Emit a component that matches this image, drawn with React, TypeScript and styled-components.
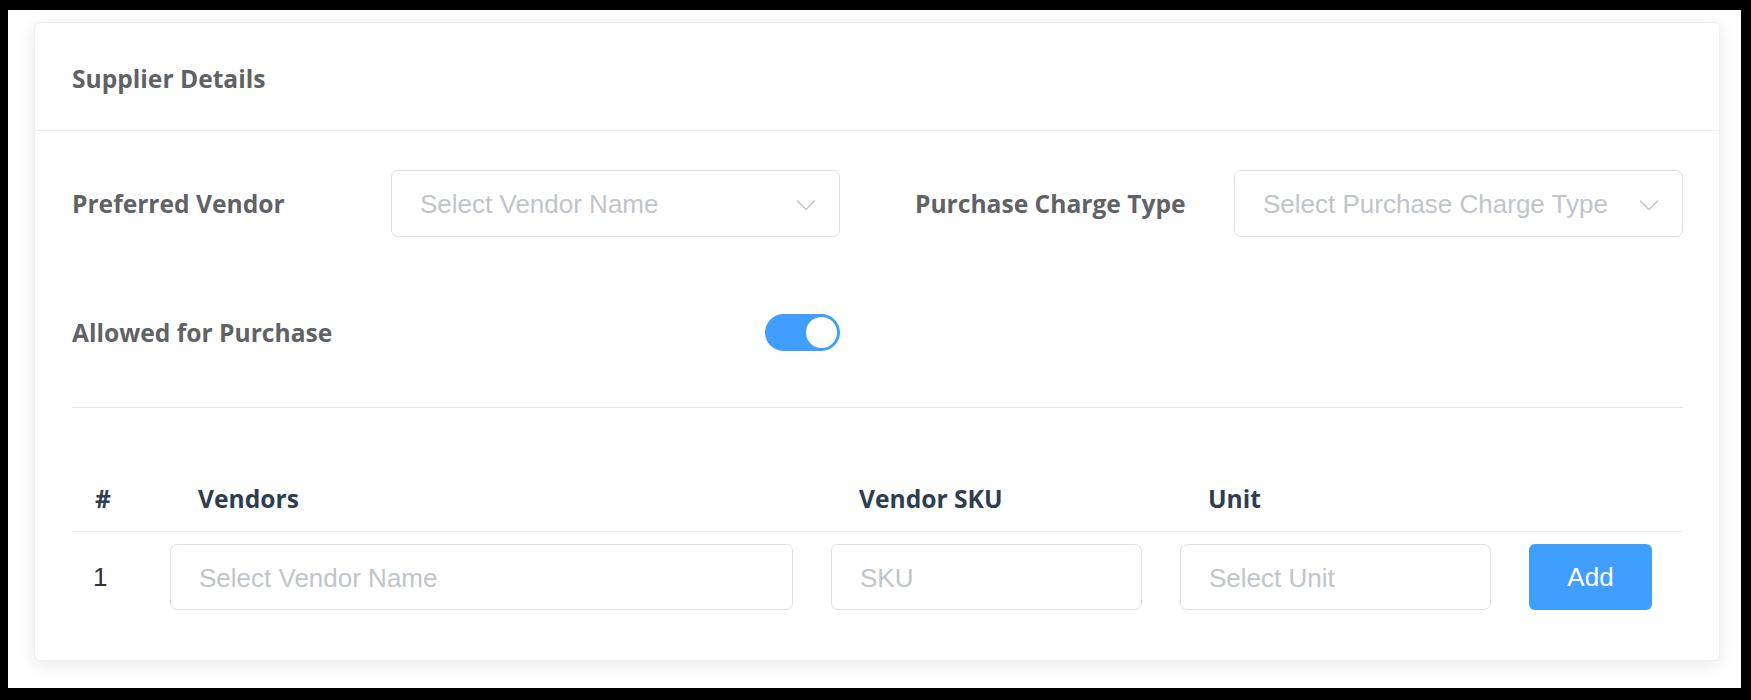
import React from "react";
import styled, { createGlobalStyle } from "styled-components";

const GlobalStyle = createGlobalStyle`
  html, body {
    margin: 0;
    padding: 0;
    background: #000;
    height: 700px;
    overflow: hidden;
  }
  * { box-sizing: border-box; }
`;

const Frame = styled.div`
  margin: 10px 10px 12px 8px;
  height: 678px;
  background: #ffffff;
  padding: 12px 21px 0 26px;
`;

const Card = styled.section`
  background: #fff;
  border: 1px solid #ebeef5;
  border-radius: 6px;
  box-shadow: 0 4px 18px rgba(0, 0, 0, 0.09);
`;

const CardHeader = styled.header`
  padding: 40px 37px 35px;
  border-bottom: 1px solid #ebeef5;
`;

const Title = styled.h2`
  margin: 0;
  font-family: "Open Sans", "Noto Sans", sans-serif;
  font-weight: 700;
  font-size: 24.6px;
  line-height: 32px;
  color: #606266;
`;

const CardBody = styled.div`
  padding: 39px 36px 50px 37px;
`;

const FormGrid = styled.div`
  display: grid;
  grid-template-columns: 1fr 1fr;
  column-gap: 75px;
  row-gap: 62px;
`;

const FormItem = styled.div`
  display: grid;
  grid-template-columns: 319px 1fr;
  align-items: center;
  height: 67px;
`;

const Label = styled.label`
  font-family: "Open Sans", "Noto Sans", sans-serif;
  font-weight: 700;
  font-size: 24.6px;
  line-height: 32px;
  color: #606266;
`;

const SelectBox = styled.div`
  height: 67px;
  border: 1px solid #dcdfe6;
  border-radius: 7px;
  background: #fff;
  display: flex;
  align-items: center;
  justify-content: space-between;
  padding: 2px 23px 0 28px;
`;

const Placeholder = styled.span`
  font-family: "Liberation Sans", Arial, sans-serif;
  font-size: 26px;
  color: #c0c4cc;
  white-space: nowrap;
`;

const Toggle = styled.button<{ $on: boolean }>`
  justify-self: end;
  width: 75px;
  height: 37px;
  border: none;
  border-radius: 19px;
  padding: 3px;
  background: ${(p) => (p.$on ? "#409eff" : "#dcdfe6")};
  display: flex;
  justify-content: ${(p) => (p.$on ? "flex-end" : "flex-start")};
  align-items: center;
  cursor: pointer;
`;

const Knob = styled.span`
  width: 31px;
  height: 31px;
  border-radius: 50%;
  background: #fff;
`;

const Divider = styled.hr`
  margin: 41px 0 0;
  border: none;
  border-top: 1px solid #e4e7ed;
`;

const TableGrid = styled.div<{ $head?: boolean }>`
  display: grid;
  grid-template-columns: 60px 623px 311px 311px 123px;
  column-gap: 38px;
  align-items: center;
  padding: ${(p) => (p.$head ? "75px 0 16px" : "12px 0 0")};
  border-bottom: ${(p) => (p.$head ? "1px solid #ebeef5" : "none")};
`;

const HeadCell = styled.div<{ $first?: boolean }>`
  font-family: "Open Sans", "Noto Sans", sans-serif;
  font-weight: 700;
  font-size: 24.6px;
  line-height: 32px;
  color: #2c3e50;
  white-space: nowrap;
  padding-left: ${(p) => (p.$first ? "23px" : "28px")};
`;

const IndexCell = styled.div`
  font-family: "Liberation Sans", Arial, sans-serif;
  font-size: 26px;
  color: #303133;
  padding-left: 21px;
`;

const Input = styled.div`
  height: 66px;
  border: 1px solid #dcdfe6;
  border-radius: 7px;
  background: #fff;
  display: flex;
  align-items: center;
  padding: 2px 0 0 28px;
`;

const AddButton = styled.button`
  height: 66px;
  width: 123px;
  border: none;
  border-radius: 6px;
  background: #409eff;
  color: #fff;
  font-family: "Liberation Sans", Arial, sans-serif;
  font-size: 26px;
  cursor: pointer;
`;

const Chevron = () => (
  <svg width="20" height="12" viewBox="0 0 20 12" fill="none">
    <path d="M1 1.5 L10 10.5 L19 1.5" stroke="#c0c4cc" strokeWidth="1.4" />
  </svg>
);

export default function App() {
  return (
    <>
      <GlobalStyle />
      <Frame>
        <Card>
          <CardHeader>
            <Title>Supplier Details</Title>
          </CardHeader>
          <CardBody>
            <FormGrid>
              <FormItem>
                <Label>Preferred Vendor</Label>
                <SelectBox>
                  <Placeholder>Select Vendor Name</Placeholder>
                  <Chevron />
                </SelectBox>
              </FormItem>
              <FormItem>
                <Label>Purchase Charge Type</Label>
                <SelectBox>
                  <Placeholder>Select Purchase Charge Type</Placeholder>
                  <Chevron />
                </SelectBox>
              </FormItem>
              <FormItem>
                <Label>Allowed for Purchase</Label>
                <Toggle $on={true} aria-label="Allowed for Purchase">
                  <Knob />
                </Toggle>
              </FormItem>
            </FormGrid>
            <Divider />
            <TableGrid $head>
              <HeadCell $first>#</HeadCell>
              <HeadCell>Vendors</HeadCell>
              <HeadCell>Vendor SKU</HeadCell>
              <HeadCell>Unit</HeadCell>
              <div />
            </TableGrid>
            <TableGrid>
              <IndexCell>1</IndexCell>
              <Input>
                <Placeholder>Select Vendor Name</Placeholder>
              </Input>
              <Input>
                <Placeholder>SKU</Placeholder>
              </Input>
              <Input>
                <Placeholder>Select Unit</Placeholder>
              </Input>
              <AddButton>Add</AddButton>
            </TableGrid>
          </CardBody>
        </Card>
      </Frame>
    </>
  );
}
